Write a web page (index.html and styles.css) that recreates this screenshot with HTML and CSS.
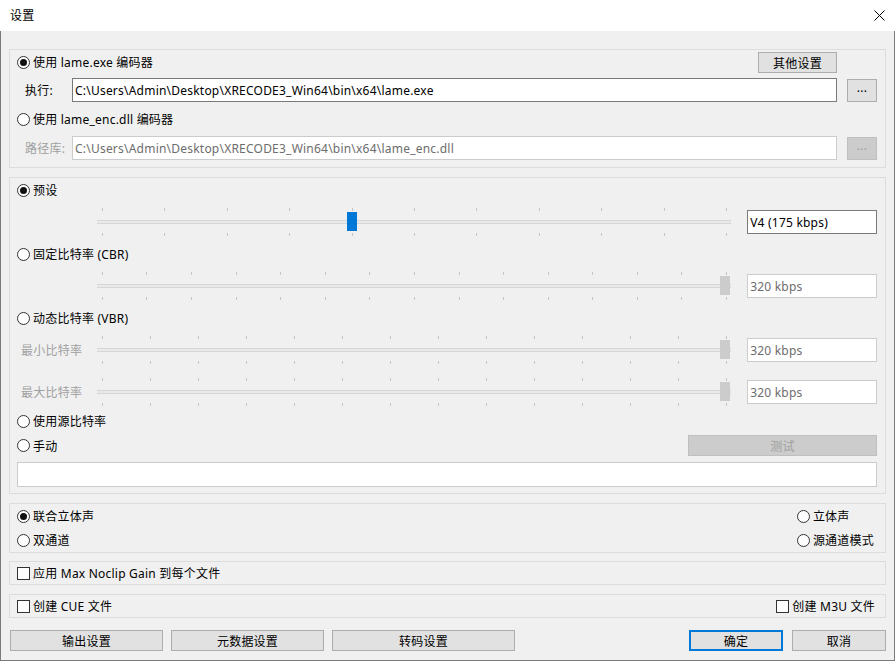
FILE: index.html
```html
<!DOCTYPE html>
<html lang="zh-CN">
<head>
    <meta charset="UTF-8">
    <title>设置</title>
    <link rel="stylesheet" href="styles.css">
</head>
<body>

    <!-- Title bar -->
    <div class="titlebar">
        <span class="title">设置</span>
        <svg class="close-icon" width="11" height="11" viewBox="0 0 11 11">
            <path d="M0.5 0.5 L10.5 10.5 M10.5 0.5 L0.5 10.5" stroke="#000" stroke-width="1" fill="none"/>
        </svg>
    </div>

    <div class="content">

        <!-- Encoder -->
        <div class="group group-encoder">
            <div class="row enc-row">
                <label class="radio checked"><span class="dot"></span>使用 lame.exe 编码器</label>
                <button class="btn btn-other">其他设置</button>
            </div>
            <div class="row path-row">
                <span class="path-label">执行:</span>
                <div class="field field-active">C:\Users\Admin\Desktop\XRECODE3_Win64\bin\x64\lame.exe</div>
                <button class="btn btn-browse">...</button>
            </div>
            <div class="row enc-row enc-dll">
                <label class="radio"><span class="dot"></span>使用 lame_enc.dll 编码器</label>
            </div>
            <div class="row path-row disabled">
                <span class="path-label">路径库:</span>
                <div class="field field-disabled">C:\Users\Admin\Desktop\XRECODE3_Win64\bin\x64\lame_enc.dll</div>
                <button class="btn btn-browse btn-disabled">...</button>
            </div>
        </div>

        <!-- Bitrate -->
        <div class="group group-bitrate">
            <label class="radio checked radio-row"><span class="dot"></span>预设</label>

            <div class="slider-row mt8">
                <span class="slider-label"></span>
                <div class="slider" data-ticks="11" data-value="4"></div>
                <div class="value-box value-active">V4 (175 kbps)</div>
            </div>

            <label class="radio radio-row mt8"><span class="dot"></span>固定比特率 (CBR)</label>

            <div class="slider-row mt8">
                <span class="slider-label"></span>
                <div class="slider slider-disabled" data-ticks="15" data-value="14"></div>
                <div class="value-box">320 kbps</div>
            </div>

            <label class="radio radio-row mt8"><span class="dot"></span>动态比特率 (VBR)</label>

            <div class="slider-row mt8">
                <span class="slider-label">最小比特率</span>
                <div class="slider slider-disabled" data-ticks="14" data-value="13"></div>
                <div class="value-box">320 kbps</div>
            </div>

            <div class="slider-row mt14">
                <span class="slider-label">最大比特率</span>
                <div class="slider slider-disabled" data-ticks="14" data-value="13"></div>
                <div class="value-box">320 kbps</div>
            </div>

            <label class="radio radio-row mt5"><span class="dot"></span>使用源比特率</label>

            <div class="row manual-row">
                <label class="radio"><span class="dot"></span>手动</label>
                <button class="btn btn-test btn-disabled">测试</button>
            </div>

            <div class="manual-input"></div>
        </div>

        <!-- Channel mode -->
        <div class="group group-mode">
            <div class="mode-col">
                <label class="radio checked radio-row"><span class="dot"></span>联合立体声</label>
                <label class="radio radio-row"><span class="dot"></span>双通道</label>
            </div>
            <div class="mode-col mode-right">
                <label class="radio radio-row"><span class="dot"></span>立体声</label>
                <label class="radio radio-row"><span class="dot"></span>源通道模式</label>
            </div>
        </div>

        <div class="group group-check group-gain">
            <label class="check"><span class="box"></span>应用 Max Noclip Gain 到每个文件</label>
        </div>

        <div class="group group-check group-files">
            <label class="check"><span class="box"></span>创建 CUE 文件</label>
            <label class="check"><span class="box"></span>创建 M3U 文件</label>
        </div>

        <!-- Buttons -->
        <div class="button-bar">
            <button class="btn btn-wide">输出设置</button>
            <button class="btn btn-wide">元数据设置</button>
            <button class="btn btn-wider">转码设置</button>
            <span class="spacer"></span>
            <button class="btn btn-ok">确定</button>
            <button class="btn btn-cancel">取消</button>
        </div>
    </div>

    <script>
        // build ticks, track and thumb for every slider
        document.querySelectorAll('.slider').forEach(function (slider) {
            const count = parseInt(slider.dataset.ticks);
            const value = parseInt(slider.dataset.value);
            let ticks = '';
            for (let i = 0; i < count; i++) {
                ticks += '<span class="tick"></span>';
            }
            const left = (value / (count - 1)) * 100;
            slider.innerHTML = `
                <div class="ticks">${ticks}</div>
                <div class="track-wrap">
                    <div class="track"></div>
                    <div class="thumb-lane"><span class="thumb" style="left: ${left}%"></span></div>
                </div>
                <div class="ticks">${ticks}</div>
            `;
        });
    </script>

</body>
</html>
```

FILE: styles.css
```css
* {
    margin: 0;
    padding: 0;
    box-sizing: border-box;
}
body {
    width: 895px;
    height: 661px;
    overflow: hidden;
    background-color: #ffffff;
    font-family: "Noto Sans", "Noto Sans CJK SC", sans-serif;
    font-size: 12px;
    letter-spacing: 0.22px;
    color: #000;
}
button {
    font-family: inherit;
    font-size: 12px;
    letter-spacing: inherit;
    color: #000;
}

/* title bar */
.titlebar {
    height: 31px;
    display: flex;
    align-items: center;
    justify-content: space-between;
    padding: 0 10px 0 10px;
    background-color: #ffffff;
}
.title {
    font-size: 12px;
    margin-top: -1px;
}
.close-icon {
    margin-top: -1px;
}

/* main area */
.content {
    height: 630px;
    background-color: #f0f0f0;
    border: 1px solid #7a7a7a;
    border-top: none;
    padding: 18px 8px 0 8px;
    display: flex;
    flex-direction: column;
}
.group {
    border: 1px solid #dcdcdc;
    padding: 0 8px 0 7px;
    margin-bottom: 9px;
}
.row {
    display: flex;
    align-items: center;
}

/* radio and checkbox */
.radio, .check {
    display: flex;
    align-items: center;
    white-space: nowrap;
    height: 20px;
}
.dot {
    width: 13px;
    height: 13px;
    border: 1px solid #333;
    border-radius: 50%;
    background-color: #fff;
    margin-right: 3px;
    display: flex;
    align-items: center;
    justify-content: center;
}
.radio.checked .dot::after {
    content: "";
    width: 7px;
    height: 7px;
    border-radius: 50%;
    background-color: #111;
}
.box {
    width: 13px;
    height: 13px;
    border: 1px solid #333;
    background-color: #fff;
    margin-right: 3px;
}

/* buttons */
.btn {
    background-color: #e1e1e1;
    border: 1px solid #adadad;
    height: 21px;
    display: flex;
    align-items: center;
    justify-content: center;
}
.btn-disabled {
    background-color: #cccccc;
    border-color: #bfbfbf;
    color: #a0a0a0;
}

/* encoder group */
.group-encoder {
    padding-bottom: 7px;
}
.enc-row {
    height: 24px;
    justify-content: space-between;
}
.btn-other {
    width: 79px;
    height: 21px;
    margin-right: 40px;
    margin-top: 1px;
}
.enc-dll {
    margin-top: 5px;
}
.path-row {
    height: 24px;
    margin-top: 4px;
}
.path-row.disabled {
    margin-top: 5px;
}
.path-label {
    width: 55px;
    padding-left: 8px;
}
.disabled .path-label {
    color: #a0a0a0;
}
.field {
    flex: 1;
    height: 24px;
    background-color: #fff;
    border: 1px solid #7a7a7a;
    padding-left: 2px;
    display: flex;
    align-items: center;
    white-space: nowrap;
    overflow: hidden;
}
.field-disabled {
    border-color: #cccccc;
    color: #6d6d6d;
}
.btn-browse {
    width: 30px;
    height: 23px;
    margin-left: 10px;
    padding-bottom: 5px;
}

/* bitrate group */
.group-bitrate {
    padding-top: 2px;
    padding-bottom: 6px;
}
.radio-row {
    height: 20px;
}
.mt5 { margin-top: 5px; }
.mt8 { margin-top: 8px; }
.mt14 { margin-top: 14px; }

.slider-row {
    display: flex;
    align-items: center;
    height: 28px;
}
.slider-label {
    width: 80px;
    padding-left: 4px;
    color: #a0a0a0;
    white-space: nowrap;
}
.slider {
    width: 635px;
    height: 28px;
    display: flex;
    flex-direction: column;
    justify-content: space-between;
}
.ticks {
    display: flex;
    justify-content: space-between;
    padding: 0 4px 0 5px;
    height: 3px;
}
.tick {
    width: 1px;
    height: 3px;
    background-color: #c4c4c4;
}
.track-wrap {
    position: relative;
    height: 4px;
}
.track {
    height: 4px;
    border-top: 1px solid #d6d6d6;
    border-bottom: 1px solid #d6d6d6;
    background-color: #e9e9e9;
}
.thumb-lane {
    position: absolute;
    left: 5px;
    right: 5px;
    top: 0;
    height: 4px;
}
.thumb {
    position: absolute;
    top: -8px;
    width: 10px;
    height: 19px;
    margin-left: -5px;
    background-color: #0078d7;
}
.slider-disabled .thumb {
    background-color: #cccccc;
    margin-left: -6px;
}
.value-box {
    width: 130px;
    height: 24px;
    margin-left: 16px;
    background-color: #fff;
    border: 1px solid #cccccc;
    color: #6d6d6d;
    padding-left: 2px;
    display: flex;
    align-items: center;
}
.value-active {
    border-color: #7a7a7a;
    color: #000;
}

.manual-row {
    height: 21px;
    margin-top: 4px;
    justify-content: space-between;
}
.btn-test {
    width: 189px;
    height: 21px;
}
.manual-input {
    height: 25px;
    margin-top: 6px;
    background-color: #fff;
    border: 1px solid #cccccc;
}

/* channel mode */
.group-mode {
    display: flex;
    justify-content: space-between;
    padding-top: 2px;
    padding-bottom: 2px;
    margin-bottom: 8px;
}
.mode-col {
    display: flex;
    flex-direction: column;
    gap: 4px;
}
.mode-right {
    padding-right: 3px;
}

/* checkbox groups */
.group-check {
    display: flex;
    justify-content: space-between;
    padding-top: 1px;
    padding-bottom: 1px;
    padding-right: 10px;
}
.group-files {
    margin-bottom: 12px;
}

/* bottom buttons */
.button-bar {
    display: flex;
    padding-left: 1px;
}
.btn-wide {
    width: 153px;
    margin-right: 8px;
}
.btn-wider {
    width: 183px;
}
.spacer {
    flex: 1;
}
.btn-ok {
    width: 94px;
    border: 2px solid #0078d7;
}
.btn-cancel {
    width: 94px;
    margin-left: 9px;
}
```
